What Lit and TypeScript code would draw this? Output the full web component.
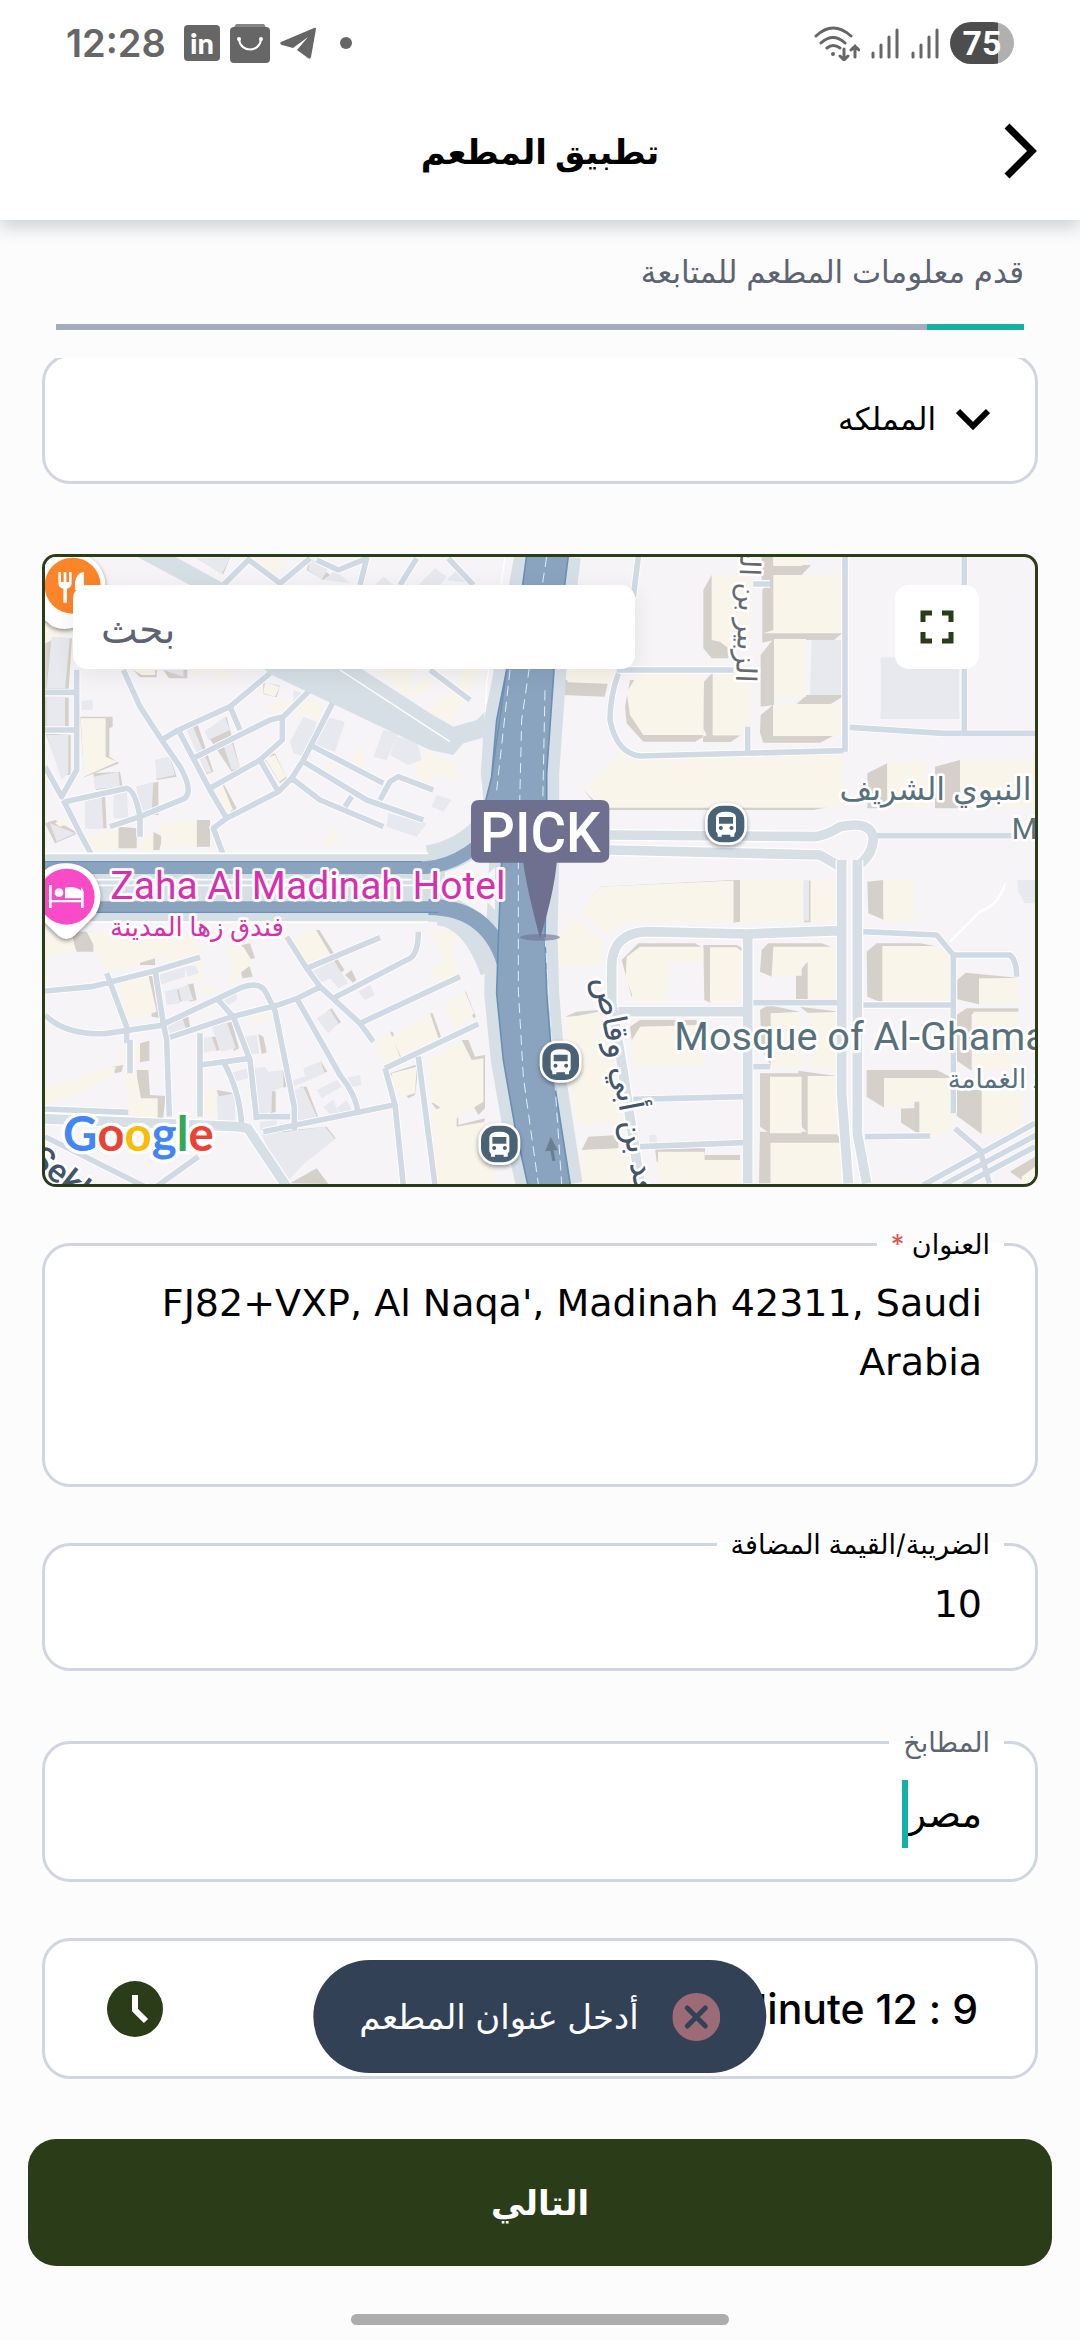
import { LitElement, html, svg, css } from 'lit';
import { customElement, property, state } from 'lit/decorators.js';

@customElement('status-bar')
export class StatusBar extends LitElement {
  @property() time = '12:28';
  @property({ type: Number }) battery = 75;

  static styles = css`
    :host {
      display: flex;
      align-items: center;
      justify-content: space-between;
      height: 86px;
      padding: 0 66px;
      color: #666;
      direction: ltr;
      font-family: Inter, 'Noto Sans', sans-serif;
    }
    .side {
      display: flex;
      align-items: center;
      gap: 10px;
    }
    .time {
      margin-right: 8px;
      font-size: 38px;
      font-weight: 600;
    }
    .dot {
      width: 12px;
      height: 12px;
      margin-left: 14px;
      border-radius: 50%;
      background: #666;
    }
    .battery {
      width: 64px;
      height: 42px;
      border-radius: 21px;
      background: linear-gradient(to right, #4d4d4d 75%, #b0b0b0 75%);
      color: #fff;
      font: bold 34px/42px Roboto, sans-serif;
      text-align: center;
    }
    svg {
      display: block;
      fill: #666;
    }
    .line {
      fill: none;
      stroke: #666;
      stroke-width: 3;
      stroke-linecap: round;
    }
    .in {
      fill: #fff;
      font: 900 29px Lato, sans-serif;
    }
  `;

  signal() {
    return html`
      <svg width="30" height="34" viewBox="0 0 30 34" aria-hidden="true">
        <path class="line" d="M3 31v-4M11 31V19M19 31V11M27 31V4" />
      </svg>
    `;
  }

  render() {
    return html`
      <div class="side">
        <span class="time">${this.time}</span>
        <svg width="36" height="36" viewBox="0 0 36 36" aria-hidden="true">
          <rect width="36" height="36" rx="4" />
          <text class="in" x="18" y="29" text-anchor="middle">in</text>
        </svg>
        <svg width="40" height="40" viewBox="0 0 40 40" aria-hidden="true">
          <path fill="#858585" d="M6 1h28l3 5H3z" />
          <rect y="4" width="40" height="36" rx="4" />
          <path d="M9 16c1 14 21 14 22 0" fill="none" stroke="#fff" stroke-width="2" stroke-linecap="round" />
          <circle cx="9" cy="16" r="2" fill="#fff" />
          <circle cx="31" cy="16" r="2" fill="#fff" />
        </svg>
        <svg width="36" height="34" viewBox="0 0 36 34" aria-hidden="true">
          <path d="M1 16 34 2q2-1 2 1l-5 28q-1 3-3 1l-11-8 11-13-15 11-11-3q-3-1-1-3z" />
        </svg>
        <span class="dot"></span>
      </div>
      <div class="side">
        <svg width="46" height="36" viewBox="0 0 46 36" aria-hidden="true">
          <path class="line" d="M2 11q17-16 35 0M7 18q12-11 24 0M13 23q6-5 13 0" />
          <circle cx="19" cy="29" r="2" />
          <path class="line" d="M30 24v11M26 31l4 4 4-4M41 32V21M37 25l4-4 4 4" />
        </svg>
        ${this.signal()} ${this.signal()}
        <span class="battery">${this.battery}</span>
      </div>
    `;
  }
}

// All map coordinates are in thirds of a pixel, split in four tiles.
const ROADS = [
  { at: '-45 -51', wide: '', thin: 'M140 390V690L95 770 45 680M45 457h90M45 570h95M100 780l50 100 35 65M105 785l185-40q25 5 40 85v60M280 390l50 110 65 100 55 80q40 70 15 95L330 830l-90 30M395 600l50-30 155-70L720 400M445 570l45 85 50 95 50 85M600 500l30 70M490 655l150-75 80-40 40-10 80-80M757 535v65l-67 60-150 85M690 660l55 95M590 835l155-80 40-40 35-55 90-175M590 835l-40 30 30 80M840 615l220 115M1050 780l30-55 25-15 105 40M820 665l190 115 170 60M785 715l85 65 190 80M965 770l-20 30M660 55l-80 80M650 55l100 75 90-75M860 60l65 30 85-35-20 80M1160 55l-50 80M1255 55l75 80M1200 390l120 90' },
  { at: '1455 -51', wide: 'M240 885l620 5q40-10 70-30 100-20 100 40-5 50-50 80M240 930l630 15 60 35', thin: 'M1035 887h480M260 390h350M265 400q-25 70-25 140 20 100 90 108l610-16M945 50v585M325 50l-15 120M670 132h50M653 560v80M1303 50v530M960 562l280 18h275' },
  { at: '-45 909', wide: 'M0 775l620 25 35 5M650 800l120 180', thin: 'M45 393l140-13 190-48 135-40M230 340l60 160v50M45 465q60 60 180 56l165-24 245-115q60-20 75 20l25 50 30 150 28 140v70M375 330l25 160 10 50 8 230M420 532l180-60 140-36 60-20 70-35M560 415l50 55 50 130 20 180M510 520v250M510 615l150-20M580 605q50 90 55 190M770 230l60 95 40 55 120 110 40 55M830 325l220-92M910 415l220-115q35-10 35-85M990 490l300-140M800 415l130 230q50 60 55 120M700 815l390-80M1065 625l280-133M1065 625l30 110 25 240M1165 590l50 385M300 540v100M45 747l250 10M45 830l320 160 140-100M670 770h110' },
  { at: '1455 909', wide: 'M930 212l-280 10-300-7q-105 5-105 105v110l35 210 50 330M265 455h375M653 210v760M935 0v700l20 270M982 0v820l28 150', thin: 'M670 428h270M670 620h50M310 718l330-8M330 860l310-12M1000 215l220 10 50 60h170q20 15 20 65M1270 285v475M1000 435h270M1005 830l195-2M1275 805l75 65 28 100M1180 975l335-185M1240 975l335-180M1300 975l215-115' },
];

const BLOCKS = [
  {
    at: '-45 -51',
    side: 'M150 530h98v30l-10 5v85l30 20-105 42zM265 860l55 5v60h-55zM370 875l28 15-10 40h-20zM500 840h40v80h-40zM500 55l80 48 20-50zM840 55l60 50-20 15-50-30zM46 290l80 5-10 155H46zM46 470l70 3v90H46zM46 580l76 5v120H95zM75 840l70 40-70 30-30-60zM190 700l80-5 8 45-80 10zM400 390h72v25h-55zM310 390h70v22h-50zM465 550l35-5 50 150-20 8zM525 575l65-45 40 155-25 10zM700 650l35-10 35 75-20 15zM545 740l35-10 40 75-15 12zM380 660l40-10 20 60-60 10zM320 740l65-15 0 100h-50zM165 770l60-10 5 105h-65zM700 425l50 12-10 35-40-10z',
    cream: 'M152 535h75v115l35 15-100 45zM145 900l120-40v65l-90 5zM320 915l50-40v55l-35 5zM390 845l110-8v80l-105 5zM700 55h60l10 20-35 30-45-40zM705 425l45 15-15 30-35-10zM710 490l75-5 50-15 45 30-15 45-60-35-60 10zM705 655l30-10 33 65-20 15zM545 740l32-8 32 78-15 5zM1040 390h110l-15 80zM1200 500l90-70 15-50h50l-55 110-45 70-55-35zM1130 470l50-60 35 20-40 35zM1160 670l30-40 90 45v50l-60-20-25 25-40-20zM980 625l28 15-10 38-30-15zM895 665l20 10-20 30-12-10zM910 865l18 20-28 45-25-20zM75 850l40-30 5 30-30 10zM45 250l70 10v20l-70 30zM310 390h65v15h-40zM480 390h40l-15 25zM545 390h60l-25 45z',
    grey: 'M65 290l55 5-15 150H50zM50 470h55v90H50zM50 585h65v115l-20 20zM155 483l33-3v30h-33zM500 55h100l-25 48zM840 55l55 30-20 35-40-30zM885 120l30-30 45 40zM1035 135l25-25 30 25zM1165 135l50-50 35 25-20 25zM1250 120l30-30 50 40zM190 710l75-15 5 45-75 8zM375 660l45-10 15 55-55 12zM320 740l50-15-5 95h-35zM165 780l50-10 5 95h-55zM250 750l40-5 5 90h-45zM60 850l75 30-55 25zM465 560l20-10 60 145-15 5zM525 575l60-45 15 40-65 30zM580 615l25-10 25 80-25 5zM820 530l40 15-20 110-50-15-10-35zM890 530l55 15-30 90-60-20zM1060 570l45 10-35 80-40-10zM1100 590l60 10 15 60-40 15-55-30zM1220 765l45 15-25 35-35-15zM1075 820l115 30-30 40-90-30zM790 450l25 10-25 30zM400 390h60v20z',
  },
  {
    at: '1455 -51',
    side: 'M545 105l-25 45v175l25 30h50v-30h65V105zM695 50h35v70h-35zM730 75h113l-30 32h-83zM697 150l35-45v195l-35 8zM730 275h212l-30 25H730zM692 345l40-50v200l-40 5zM830 465h117l-45 27H800zM692 525l37-30v90h186l-45 23H700l-10-30zM95 420h141l-12 50-125-5zM300 420l-15 80 5 50 50 55h155l35-20-80-160zM522 425l30-32v193h80l-30 20h-83zM160 750l50 48h700l-60 12H210zM1012 700l60-30v135h-60zM1215 680l75-20v145h-75z',
    cream: 'M545 105h116v220h-66l-25-20-25-5zM730 50h115l-30 28h-85zM730 105h212v175H700l30-10zM732 297h96v173h-96zM729 495h217v93H729zM105 390h150l-12 42-130-5zM330 395h190v190H340l-40-60-10-70zM548 393h112v193H548zM270 635h670v168H230l-60-60zM1072 670l115-10v145h-115zM1290 660h225v145h-225z',
    grey: 'M845 300h102v165H840zM1052 352h236v185h-236z',
  },
  {
    at: '-45 909',
    side: 'M120 215h70v60h-50zM330 245h45v70h-45zM635 255l25-5 15 45-30 5zM628 320l30-5 10 35-30 5zM858 210h10l75 120-10 8zM945 345l20-15 14 30-10 8zM355 340l22 10v70l18 10v45l-30-5zM435 390l20-5 10 35-15 5zM470 375l20-5 10 50-20 5zM455 465l18-5 8 45-15 8zM585 490l20-5 22 80-15 8zM545 530l12 0 12 40-12 3zM890 455l15-10 28 42-15 8zM1080 515h8l28 75-8 5zM1200 460h8l25 70-8 5zM1300 395h8l30 75-8 5zM1295 540l20 0 20 50 30-5v160l-20 20-50-90zM330 550l28-8v60l-30 5zM250 620l30-5-5 20-20 5zM320 630h35l5 75 47 3-10 85-70-10zM700 530l-15-8 10 60 15-5zM1080 640l75-25 10 10-10 80-20 10zM1200 730l85-15 0 80 80-20-5 25-90 10-65-80zM690 820l200-20 27 35-10 8-30-30zM780 970l80-45 35 47zM560 690l55 10v100l-20 0zM870 600l22 35-10 3zM810 680l20 0 40 105-10 3zM725 690l12 5v60l-15 5zM755 630l18 5-3 45-10 3z',
    cream: 'M45 215l80-5 10 60-90 25zM170 215l170-10 160 20 20 60-5 120 20 0 65-35-10-110 50 0 30 50-40 30-30 40-70 0-140-90-155 48zM780 250l75-42 55 90-85 20zM1195 210l90 0 5 25-25 25 25 75-65 40-30-50 50-20zM270 365l85-20 25 110-95 30zM1245 430l60-35 28 65-60 50zM1085 530l115-70 25 75-110 60zM1035 545l45-30 30 75-45 30zM275 565l55-20v60l-45 5zM45 680l215-60-20 30-70 40-125 45zM288 635h30l15 80 50 0v80l-85-5zM1195 600l100-60 30 60 35-5v130l-80 50-75-50zM1085 640l75-20-5 80-35 10-20-10zM1205 755l75-35v80l85-15 35 190h-180zM510 690l50-5-5 85h-45zM665 475l55-15-5 25-40 5z',
    grey: 'M385 345l80-25 0 30-75 25zM465 320l30-5 12 25-35 10zM405 395l35-10 10 45-40 5zM445 385l30-10 15 45-35 5zM400 490l55-20 15 40-60 20zM545 500l45-15 28 80-45 10zM510 535l35-5 15 40-45 10zM645 530l35-5 8 55-38 5zM570 415l50-25 0 30-25 15zM840 340l70-40 45 70-30 15-25-30-30 15zM860 475l40-25 25 40-30 30zM985 395l35-20 15 30-30 15zM600 640l50-15 5 30-45 10zM670 625l35-5 10 15 45-5v50l-35 15v60l-50 10zM790 660l35-10-5-25 50-20 15 35-95 40zM790 690l30-10 45 100-75 20zM860 690l60-30 15 20-60 35zM880 740l30-20 20 50-20 5zM920 745l30-25 15 30-30 15zM940 655l50-10 5 30-45 10zM560 710l55-10v100l-50-5zM690 785l50-5v25l-50 5zM695 825l190-25 30 38-95 75-55 60z',
  },
  {
    at: '1455 909',
    side: 'M150 155l60-75 400-20h20v125l-20 3V62l-400 20zM822 62h20v125h-20zM1012 65l48-5v100l15 25-60-25zM275 300l50-50h170l20 12-180 10-30 140zM520 255h100l28 15-105 5v153l-20-8zM695 270l20-20h160l40 15-180 0-10 85-35-15zM798 345l35-40v130l-35-15zM1010 275l30-25h130l80 15-190 0v165l-48-20zM1282 360l25-22 155 15-115 5v75l-65-15zM1280 465l30-20h155v12l-140 5v170l-45-30zM690 450l25-15 95 20-85 5v165l-30-60zM810 440l120 15-95 5zM300 500l30-20h170v15l-165 5-20 115zM1010 630h210l50 25h-205v90l-55-35zM1113 745h40v-30h25v100l-10 8-55-35zM690 640h115l10 15-95-5v170l-30-20zM805 632l130 18-100 0v170l-20-20zM690 815h225l25 33H722v122h-35zM1280 690h75v132l-75-55zM375 865h150v20h105v20H380zM155 870l20-40 90-5v40zM1440 935l75-45v30l-40 40zM105 470l35-15 65-5v15z',
    cream: 'M150 155l60-75 400-18v125l-320 0-65 35zM630 62h190v122l-190 2zM842 62h100v100l-25 25h-75zM1060 60h92v125h-92zM78 230l52-58 95 70-15 75-132 3zM290 290l40-30h190v45h-100l-10 125-95-5-28-70zM540 262h80l30 25v115l-20 25h-90zM730 260h180l30 20v152h-105V305h-20v42l-90 0zM1057 258h180l35 50v123h-215zM1347 355h120v76h-120zM1330 455h135l-5 170-130 5zM722 460h92v165h-92zM835 458h100v170H835zM330 500h190v120H315l-15-70zM105 475l100-20 50 180 20 150-120 15-30-50zM1062 655h213v145l-55 28h-52V725h-20l-15 20h-71zM720 650h95v170h-95zM833 648h103v175H833zM722 850h218l15 120H722zM1357 695h120v122l-120 10zM384 875h140v25h110v70H384zM150 890l20-20 110-5 35 105H155zM1475 950l40-30v50h-40z',
    grey: 'M820 62h17v120h-17zM1462 60h53v70l-30 0-20-35zM358 825h22v30h-22z',
  },
];

@customElement('pick-map')
export class PickMap extends LitElement {
  static styles = css`
    :host {
      display: block;
      position: relative;
      height: 627px;
      overflow: hidden;
      border: 3px solid #2b3c18;
      border-radius: 14px;
      background: #f6f4f6;
      direction: ltr;
    }
    .canvas {
      display: block;
      width: 100%;
      height: 100%;
    }
    .overlay {
      position: absolute;
      inset: 28px 56px auto 28px;
      display: flex;
      justify-content: space-between;
    }
    .search {
      box-sizing: border-box;
      width: 62%;
      height: 84px;
      padding: 0 28px;
      border: 0;
      border-radius: 14px;
      background: #fff;
      box-shadow: 0 4px 24px rgba(0, 0, 0, 0.08);
      font: 39px 'Noto Sans', 'DejaVu Sans', sans-serif;
      outline: none;
    }
    .search::placeholder {
      color: #5f6270;
      opacity: 1;
    }
    .full {
      display: grid;
      place-items: center;
      width: 84px;
      height: 84px;
      padding: 0;
      border: 0;
      border-radius: 14px;
      background: #fff;
    }
    .casing,
    .lane,
    .street {
      fill: none;
      stroke-linejoin: round;
    }
    .casing { stroke: #fff; stroke-width: 36; }
    .lane { stroke: #d6dfe6; stroke-width: 29; }
    .street { stroke: #cfdae4; stroke-width: 17; }
    .street-casing { fill: none; stroke: #fff; stroke-width: 22; }
    .side { fill: #d5d0c9; }
    .cream { fill: #f9f5ea; }
    .grey { fill: #e7e9ef; }
    .light { fill: #d6dfe6; }
    .motor { fill: #8aa4c0; stroke: #6c8fb5; stroke-width: 5; }
    .motor-line { fill: none; stroke: #8aa4c0; }
    .band { fill: none; stroke: #d6dfe6; }
    .dash { fill: none; stroke: #e2eef7; stroke-width: 3; stroke-dasharray: 30 18; }
    text {
      paint-order: stroke;
      stroke: #fff;
      stroke-width: 16;
      stroke-linejoin: round;
      font-family: Roboto, 'DejaVu Sans', sans-serif;
    }
    .hotel { fill: #d92fae; font-size: 117px; }
    .hotel-ar { fill: #d92fae; font-size: 78px; }
    .place { fill: #57717c; font-size: 119px; }
    .place-ar { fill: #57717c; font-size: 95px; }
    .place-sm { fill: #57717c; font-size: 78px; }
    .place-md { fill: #57717c; font-size: 88px; }
    .road-name { fill: #66696f; font-size: 84px; }
    .road-dark { fill: #44546b; font-size: 100px; }
    .rtl { direction: rtl; }
    .pick { fill: #fff; stroke: none; font-size: 164px; font-weight: 500; }
    .google { font: bold 142px Lato, sans-serif; stroke-width: 20; }
    .marker { filter: drop-shadow(0 6px 6px rgba(0, 0, 0, 0.4)); }
  `;

  bus(x: number, y: number) {
    return svg`
      <g transform="translate(${x} ${y})">
        <rect class="marker" x="-63" y="-63" width="126" height="126" rx="52" fill="#fff" />
        <rect x="-55" y="-55" width="110" height="110" rx="44" fill="#4a6276" />
        <path fill="#fff" fill-rule="evenodd" d="M-30-20q0-17 30-17t30 17v42l-5 8v8h-12v-6h-26v6h-12v-8l-5-8zM-21-21v20h42v-20zM-16 6a6 6 0 1 0 1 0zM16 6a6 6 0 1 0 1 0z" />
      </g>
    `;
  }

  render() {
    return html`
      <svg class="canvas" viewBox="0 0 2970 1881" preserveAspectRatio="xMidYMid slice" role="img" aria-label="خريطة">
        ${BLOCKS.map((b) => svg`
          <g transform="translate(${b.at})">
            <path class="side" d=${b.side} />
            <path class="cream" d=${b.cream} />
            <path class="grey" d=${b.grey} />
          </g>
        `)}
        ${ROADS.map((r) => svg`
          <g transform="translate(${r.at})">
            <path class="street-casing" d=${r.thin} />
            <path class="casing" d=${r.wide} />
            <path class="street" d=${r.thin} />
            <path class="lane" d=${r.wide} />
          </g>
        `)}
        <path d="M2880 979q-15 60-75 85l-90 90" fill="none" stroke="#fff" stroke-width="8" />

        <path class="light" d="M275-1h115l155 85 410 255 200 130 70 40 70-20 30-30 30 30-30 50-70 20-30 35-70-15L670 349 435 84z" />
        <path d="M885 339l330 215M1380 0L1325 380 1310 700" fill="none" stroke="#fff" stroke-width="4" />

        <path class="band" stroke-width="205" d="M0 992H1200" />
        <path class="band" stroke-width="90" d="M1150 910Q1280 890 1370 760M1180 1060Q1290 1070 1350 1240" />
        <path class="band" stroke-width="75" d="M1445 0L1385 339 1355 489 1345 649 1370 909 1360 1149 1355 1309 1375 1509 1410 1709 1450 1881M1570 0L1527 339 1505 649V909L1500 1139 1505 1309 1525 1559 1575 1881" />
        <path d="M1150 992Q1300 992 1350 930V1060Q1300 992 1150 992" fill="#f6f4f6" />
        <path d="M0 889H1150M0 985H1180M0 968H1100M0 1095H1150" fill="none" stroke="#fff" stroke-width="5" />
        <path class="motor-line" stroke-width="38" d="M0 932H1140Q1270 925 1390 770" />
        <path class="motor-line" stroke-width="34" d="M0 1050H1180" />
        <path class="motor-line" stroke-width="48" d="M1150 1050Q1340 1050 1385 1240" />
        <path class="motor" d="M1445-5L1433 84 1385 339 1355 489 1340 660 1315 760 1370 909 1360 1149 1355 1309 1375 1509 1410 1709 1450 1890H1577L1525 1559 1505 1309 1500 1139 1505 909V649L1527 339 1570-5z" />
        <path class="dash" d="M1505 0L1452 339 1430 489 1420 909V1300L1435 1560 1480 1881M1395 339L1355 700M1500 400L1490 900M1500 1140L1550 1881" />
        <path d="M0 914H1130M0 1066H1180M1385 339L1340 660" fill="none" stroke="#6c8fb5" stroke-width="4" />
        <path d="M1517 1740l22 40-13-1 5 32-9 2-6-32-15 2z" fill="#6b7f92" />

        <text class="road-name rtl" transform="translate(2073 375) rotate(92)">الزبير بن العوام</text>
        <text class="road-dark rtl" transform="translate(1790 2000) rotate(79)">سعد بن أبي وقاص</text>
        <text class="place-ar rtl" x="2960" y="728">النبوي الشريف</text>
        <text class="place-md" x="2900" y="846">Masjid</text>
        <text class="place" x="1888" y="1479">Mosque of Al-Ghamamah</text>
        <text class="place-sm rtl" x="2708" y="1592" text-anchor="end">مسجد الغمامة</text>
        <text class="road-dark" transform="translate(-50 1815) rotate(38)" font-weight="500">Sekka</text>

        <g class="marker">
          <path fill="#fff" d="M83-14a100 100 0 0 1 85 150q-30 40-55 60-20 20-55 20T8 196q-30-20-60-60A100 100 0 0 1 83-14" />
        </g>
        <circle cx="83" cy="86" r="84" fill="#fc8429" />
        <path fill="#fff" d="M40 45h8v30h8V45h8v30h8V45h8v32q0 14-14 18v42h-11V95Q40 92 40 77zM90 75q5-28 27-30v92h-11v-38H90z" />
        <g class="marker">
          <path fill="#fff" d="M65 919a100 100 0 0 1 85 155l-62 62q-24 20-48 0l-65-62A100 100 0 0 1 65 919" />
        </g>
        <circle cx="65" cy="1019" r="84" fill="#f94ac8" />
        <path fill="#fff" d="M12 984h8v45h88v-38q8 5 8 14v48h-8v-17H20v17h-8z" />
        <circle cx="42" cy="1007" r="13" fill="#fff" />
        <path fill="#fff" d="M60 1024v-32q30-6 50 10v22z" />
        <text class="hotel" x="196" y="1026">Zaha Al Madinah Hotel</text>
        <text class="hotel-ar rtl" x="717" y="1136">فندق زها المدينة</text>

        ${this.bus(2043, 801)} ${this.bus(1547, 1514)} ${this.bus(1363, 1761)}

        <ellipse cx="1485" cy="1141" rx="60" ry="10" fill="#6f6f8f" fill-opacity="0.6" />
        <path fill="#6f6f8f" d="M1303 729h365q25 0 25 25v138q0 25-25 25h-133q-8 90-50 227-40-150-50-227h-132q-25 0-25-25V754q0-25 25-25z" />
        <text class="pick" x="1486" y="885" text-anchor="middle">PICK</text>

        <text class="google" x="54" y="1783"><tspan fill="#4285f4">G</tspan><tspan fill="#ea4335">o</tspan><tspan fill="#fbbc05">o</tspan><tspan fill="#4285f4">g</tspan><tspan fill="#34a853">l</tspan><tspan fill="#ea4335">e</tspan></text>
      </svg>
      <div class="overlay">
        <input class="search" type="search" placeholder="بحث" aria-label="بحث" />
        <button class="full" aria-label="ملء الشاشة">
          <svg width="34" height="34" viewBox="0 0 34 34" fill="none" stroke="#2b3c18" stroke-width="5">
            <path d="M3 12V3h9M22 3h9v9M31 22v9h-9M12 31H3v-9" />
          </svg>
        </button>
      </div>
    `;
  }
}

@customElement('app-root')
export class AppRoot extends LitElement {
  @state() address = "FJ82+VXP, Al Naqa', Madinah 42311, Saudi Arabia";
  @state() vat = '10';
  @state() cuisine = 'مصر';
  @state() progress = 10;

  static styles = css`
    :host {
      display: flex;
      flex-direction: column;
      min-height: 100vh;
      background: #fcfcfc;
      color: #000;
      direction: rtl;
      font-family: Inter, 'Noto Sans', 'DejaVu Sans', sans-serif;
    }
    header {
      background: #fff;
      box-shadow: 0 8px 16px rgba(50, 65, 80, 0.22);
    }
    .app-bar {
      display: grid;
      grid-template-columns: 60px 1fr 60px;
      align-items: center;
      box-sizing: border-box;
      height: 134px;
      padding: 0 42px 4px;
    }
    h1 {
      margin: 0;
      font-size: 34px;
      font-weight: bold;
      text-align: center;
    }
    button {
      font-family: inherit;
    }
    .back {
      display: grid;
      justify-content: start;
      padding: 0;
      border: 0;
      background: none;
    }
    .intro {
      padding: 24px 56px 28px;
    }
    .intro p {
      margin: 0 0 24px;
      color: #5d6372;
      font-size: 31px;
      line-height: 56px;
    }
    .track {
      height: 6px;
      background: #a3adbf;
    }
    .bar {
      height: 100%;
      background: #14b0aa;
    }
    main {
      flex: 1;
      overflow: hidden;
      padding: 0 42px;
    }
    .box {
      box-sizing: border-box;
      width: 100%;
      border: 3px solid #d0d5df;
      border-radius: 28px;
      background: #fff;
    }
    .country {
      display: flex;
      align-items: center;
      gap: 20px;
      height: 130px;
      margin-top: -4px;
      padding: 0 45px;
    }
    select {
      flex: 1;
      appearance: none;
      border: 0;
      padding: 0;
      background: none;
      color: #000;
      font: inherit;
      font-size: 31px;
      line-height: 70px;
      outline: none;
    }
    pick-map {
      margin-top: 70px;
    }
    fieldset {
      min-width: 0;
      margin: 38px 0 0;
      padding: 0;
    }
    fieldset.apart {
      margin-top: 52px;
    }
    legend {
      margin-inline-start: 31px;
      padding: 0 14px;
      font-size: 27px;
      line-height: 39px;
    }
    .required {
      color: #d9534f;
    }
    .muted {
      color: #5d6372;
    }
    .text {
      display: block;
      box-sizing: border-box;
      width: 100%;
      border: 0;
      background: none;
      color: #000;
      font: 38px/59px 'DejaVu Sans', sans-serif;
      outline: none;
      resize: none;
    }
    textarea.text {
      height: 220px;
      padding: 10px 53px;
      overflow: hidden;
    }
    input.text {
      height: 104px;
      padding: 10px 53px 34px;
    }
    .editing {
      display: flex;
      height: 117px;
      padding: 18px 53px 0;
      box-sizing: border-box;
    }
    input.typed {
      width: auto;
      height: 68px;
      padding: 0;
      field-sizing: content;
      border-inline-end: 6px solid #14b0aa;
    }
    .time {
      display: flex;
      align-items: center;
      justify-content: space-between;
      height: 141px;
      margin-top: 56px;
      padding: 0 57px 0 62px;
      color: #000;
      font-size: 41px;
      font-weight: 500;
    }
    footer {
      position: relative;
      padding: 0 28px 15px;
    }
    .next {
      display: block;
      width: 100%;
      height: 127px;
      padding: 0;
      border: 0;
      border-radius: 28px;
      background: #2b3c18;
      color: #fff;
      font-size: 34px;
      font-weight: bold;
    }
    .home {
      width: 37%;
      height: 11px;
      margin: 48px auto 0;
      border-radius: 6px;
      background: #adadad;
    }
    .toast {
      position: absolute;
      bottom: calc(100% + 66px);
      left: 50%;
      transform: translateX(-50%);
      display: flex;
      align-items: center;
      gap: 34px;
      height: 113px;
      padding: 0 46px;
      border-radius: 57px;
      background: #334156;
      color: #fff;
      font-size: 34px;
      white-space: nowrap;
    }
    svg {
      display: block;
    }
  `;

  render() {
    return html`
      <header>
        <status-bar></status-bar>
        <div class="app-bar">
          <button class="back" aria-label="رجوع">
            <svg width="34" height="56" viewBox="0 0 34 56" fill="none" stroke="#000" stroke-width="7">
              <path d="M3 3l25 25L3 53" />
            </svg>
          </button>
          <h1>تطبيق المطعم</h1>
        </div>
      </header>
      <section class="intro">
        <p>قدم معلومات المطعم للمتابعة</p>
        <div class="track">
          <div class="bar" style="width: ${this.progress}%"></div>
        </div>
      </section>
      <main>
        <div class="box country">
          <svg width="34" height="22" viewBox="0 0 34 22" fill="none" stroke="#000" stroke-width="6">
            <path d="M2 3l15 15L32 3" />
          </svg>
          <select aria-label="المنطقة">
            <option>المملكه</option>
          </select>
        </div>

        <pick-map></pick-map>

        <fieldset class="box">
          <legend>
            <label for="address">العنوان <span class="required">*</span></label>
          </legend>
          <textarea
            id="address"
            class="text"
            .value=${this.address}
            @input=${(e: Event) => (this.address = (e.target as HTMLTextAreaElement).value)}
          ></textarea>
        </fieldset>

        <fieldset class="box">
          <legend><label for="vat">الضريبة/القيمة المضافة</label></legend>
          <input id="vat" class="text" inputmode="numeric" .value=${this.vat} />
        </fieldset>

        <fieldset class="box apart">
          <legend class="muted"><label for="cuisine">المطابخ</label></legend>
          <div class="editing">
            <input id="cuisine" class="text typed" .value=${this.cuisine} />
          </div>
        </fieldset>

        <button class="box time">
          <span>9 : 12 Minute</span>
          <svg width="56" height="56" viewBox="0 0 56 56">
            <circle cx="28" cy="28" r="28" fill="#2b3c18" />
            <path d="M28 14v15l11 11" fill="none" stroke="#fff" stroke-width="6" />
          </svg>
        </button>
      </main>
      <footer>
        <div class="toast" role="alert">
          <svg width="48" height="48" viewBox="0 0 48 48">
            <circle cx="24" cy="24" r="24" fill="#9c6b76" />
            <path d="M15 15l18 18M33 15L15 33" stroke="#334156" stroke-width="5" stroke-linecap="round" />
          </svg>
          <span>أدخل عنوان المطعم</span>
        </div>
        <button class="next">التالي</button>
        <div class="home"></div>
      </footer>
    `;
  }
}
